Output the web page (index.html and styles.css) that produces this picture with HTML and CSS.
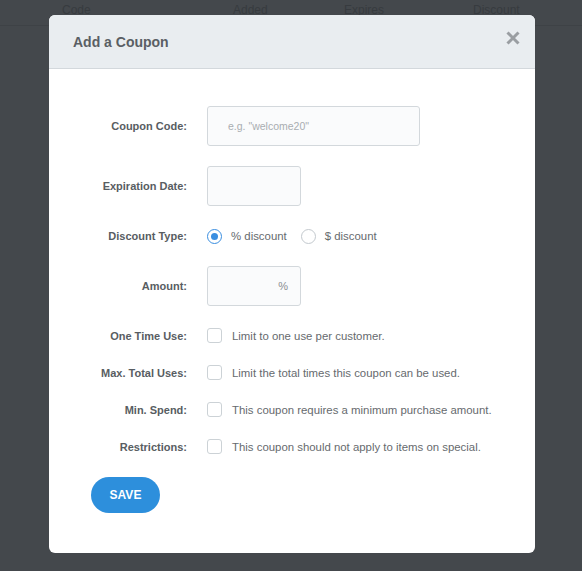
FILE: index.html
```html
<!DOCTYPE html>
<html>
<head>
<meta charset="utf-8">
<link rel="stylesheet" href="styles.css">
</head>
<body>
<div class="table-head">
  <span class="th th-code">Code</span>
  <span class="th th-added">Added</span>
  <span class="th th-expires">Expires</span>
  <span class="th">Discount</span>
</div>

<div class="modal">
  <div class="modal-header">
    <h2 class="modal-title">Add a Coupon</h2>
    <svg class="close" width="14" height="14" viewBox="0 0 14 14"><path d="M1.5 1.5 L12.5 12.5 M12.5 1.5 L1.5 12.5" stroke="#9a9ea2" stroke-width="3" stroke-linecap="butt" fill="none"/></svg>
  </div>
  <div class="modal-body">
    <div class="row row-input">
      <label class="label">Coupon Code:</label>
      <div class="field"><div class="input input-wide"><span class="placeholder">e.g. "welcome20"</span></div></div>
    </div>
    <div class="row row-input">
      <label class="label">Expiration Date:</label>
      <div class="field"><div class="input input-short"></div></div>
    </div>
    <div class="row row-radio">
      <label class="label">Discount Type:</label>
      <div class="field options">
        <span class="option"><span class="radio radio-on"></span>% discount</span>
        <span class="option"><span class="radio"></span>$ discount</span>
      </div>
    </div>
    <div class="row row-input">
      <label class="label">Amount:</label>
      <div class="field"><div class="input input-short input-suffix"><span class="suffix">%</span></div></div>
    </div>
    <div class="row row-check">
      <label class="label">One Time Use:</label>
      <div class="field option"><span class="checkbox"></span>Limit to one use per customer.</div>
    </div>
    <div class="row row-check">
      <label class="label">Max. Total Uses:</label>
      <div class="field option"><span class="checkbox"></span>Limit the total times this coupon can be used.</div>
    </div>
    <div class="row row-check">
      <label class="label">Min. Spend:</label>
      <div class="field option"><span class="checkbox"></span>This coupon requires a minimum purchase amount.</div>
    </div>
    <div class="row row-check">
      <label class="label">Restrictions:</label>
      <div class="field option"><span class="checkbox"></span>This coupon should not apply to items on special.</div>
    </div>
    <div class="actions">
      <button class="btn-save">SAVE</button>
    </div>
  </div>
</div>
</body>
</html>
```

FILE: styles.css
```css
* { box-sizing: border-box; }
html, body { margin: 0; padding: 0; }
body {
  width: 582px;
  height: 571px;
  background: #44484c;
  font-family: "Liberation Sans", Arial, sans-serif;
  position: relative;
  overflow: hidden;
}
.table-head {
  height: 26px;
  border-bottom: 1px solid #3e4246;
  display: flex;
  align-items: center;
  padding-left: 62px;
  padding-bottom: 5px;
  font-size: 12px;
  color: #373b3f;
}
.th-code { width: 171px; }
.th-added { width: 111px; }
.th-expires { width: 129px; }

.modal {
  position: absolute;
  left: 49px;
  top: 15px;
  width: 486px;
  height: 538px;
  background: #fff;
  border-radius: 6px;
  overflow: hidden;
}
.modal-header {
  height: 54px;
  background: #e9edf0;
  border-bottom: 1px solid #d3d8dc;
  display: flex;
  align-items: center;
  justify-content: space-between;
  padding: 0 15px 0 24px;
}
.modal-title {
  margin: 0;
  font-size: 14px;
  font-weight: bold;
  color: #5a5f64;
}
.close { margin-top: -8px; }

.modal-body {
  padding: 37px 42px 0 42px;
  display: flex;
  flex-direction: column;
  gap: 20px;
}
.row {
  display: grid;
  grid-template-columns: 96px 1fr;
  column-gap: 20px;
  align-items: center;
}
.row-input { height: 40px; }
.row-radio { height: 20px; }
.row-check { height: 17px; }
.label {
  text-align: right;
  font-size: 11px;
  font-weight: bold;
  color: #585d62;
  white-space: nowrap;
}
.field { display: flex; align-items: center; }
.input {
  height: 40px;
  border: 1px solid #d3d8dc;
  border-radius: 3px;
  background: #fafbfc;
  display: flex;
  align-items: center;
}
.input-wide { width: 213px; padding-left: 20px; }
.input-short { width: 94px; }
.input-suffix { justify-content: flex-end; padding-right: 12px; }
.placeholder { font-size: 10.5px; color: #a9adb1; }
.suffix { font-size: 11px; color: #8a8e92; }

.options { gap: 14px; }
.option {
  display: flex;
  align-items: center;
  font-size: 11.4px;
  color: #666a6e;
  white-space: nowrap;
}
.radio {
  width: 15px;
  height: 15px;
  border-radius: 50%;
  border: 1px solid #c3c9ce;
  background: #fff;
  margin-right: 9px;
  display: inline-flex;
  align-items: center;
  justify-content: center;
}
.radio-on { border-color: #3a8ee0; }
.radio-on::after {
  content: "";
  width: 7px;
  height: 7px;
  border-radius: 50%;
  background: #3a8ee0;
}
.checkbox {
  width: 15px;
  height: 15px;
  border: 1px solid #ccd2d6;
  border-radius: 3px;
  background: #fff;
  margin-right: 10px;
}
.row-radio + .row-input + .row-check { margin-top: 1px; }

.actions { padding-top: 2px; }
.btn-save {
  width: 69px;
  height: 36px;
  border: none;
  border-radius: 18px;
  background: #2d8fdc;
  color: #fff;
  font-family: "Liberation Sans", Arial, sans-serif;
  font-size: 12px;
  font-weight: bold;
  padding: 0;
}
```
